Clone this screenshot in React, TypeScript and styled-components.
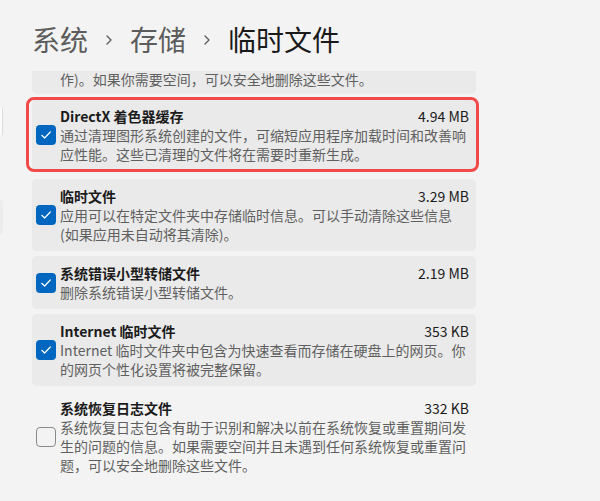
import styled, { createGlobalStyle } from 'styled-components';

const GlobalStyle = createGlobalStyle`
  html, body {
    margin: 0;
    padding: 0;
    background: #f3f3f3;
  }
  body {
    font-family: "Noto Sans CJK SC", "Noto Sans", sans-serif;
    color: #1b1b1b;
  }
`;

type Item = {
  title: string;
  size: string;
  lines: string[];
  checked: boolean;
  plain?: boolean;
  highlight?: boolean;
};

const items: Item[] = [
  {
    title: 'Windows 错误报告文件',
    size: '1.02 MB',
    lines: [
      '系统创建的 Windows 错误报告文件可用于诊断和解决问',
      '题(包括安装、升级或其他可能导致系统不稳定的操',
      '作)。如果你需要空间，可以安全地删除这些文件。',
    ],
    checked: true,
  },
  {
    title: 'DirectX 着色器缓存',
    size: '4.94 MB',
    lines: [
      '通过清理图形系统创建的文件，可缩短应用程序加载时间和改善响',
      '应性能。这些已清理的文件将在需要时重新生成。',
    ],
    checked: true,
    highlight: true,
  },
  {
    title: '临时文件',
    size: '3.29 MB',
    lines: ['应用可以在特定文件夹中存储临时信息。可以手动清除这些信息', '(如果应用未自动将其清除)。'],
    checked: true,
  },
  {
    title: '系统错误小型转储文件',
    size: '2.19 MB',
    lines: ['删除系统错误小型转储文件。'],
    checked: true,
  },
  {
    title: 'Internet 临时文件',
    size: '353 KB',
    lines: ['Internet 临时文件夹中包含为快速查看而存储在硬盘上的网页。你', '的网页个性化设置将被完整保留。'],
    checked: true,
  },
  {
    title: '系统恢复日志文件',
    size: '332 KB',
    lines: [
      '系统恢复日志包含有助于识别和解决以前在系统恢复或重置期间发',
      '生的问题的信息。如果需要空间并且未遇到任何系统恢复或重置问',
      '题，可以安全地删除这些文件。',
    ],
    checked: false,
    plain: true,
  },
];

const Chevron = () => (
  <ChevronIcon width="8" height="14" viewBox="0 0 8 14">
    <path d="M2 3 L6 7 L2 11" fill="none" stroke="#5c5c5c" strokeWidth="1.3" strokeLinecap="round" strokeLinejoin="round" />
  </ChevronIcon>
);

const Checkbox = ({ checked }: { checked: boolean }) => (
  <Box $checked={checked}>
    {checked && (
      <svg width="12" height="12" viewBox="0 0 12 12">
        <path d="M1.8 6.3 L4.6 9 L10.3 3" fill="none" stroke="#ffffff" strokeWidth="1.2" strokeLinecap="round" strokeLinejoin="round" />
      </svg>
    )}
  </Box>
);

const App = () => {
  return (
    <Page>
      <GlobalStyle />
      <EdgeRail>
        <EdgeItem $variant="outlined" />
        <EdgeItem $variant="filled" />
      </EdgeRail>
      <Main>
        <Header>
          <Crumb>系统</Crumb>
          <Chevron />
          <Crumb>存储</Crumb>
          <Chevron />
          <Crumb $current>临时文件</Crumb>
        </Header>
        <Viewport>
          <List>
            {items.map((item, i) => (
              <Card key={item.title} $plain={item.plain} $highlight={item.highlight} $clipped={i === 0}>
                <Checkbox checked={item.checked} />
                <Body>
                  <HeadRow>
                    <Title>{item.title}</Title>
                    <Size>{item.size}</Size>
                  </HeadRow>
                  {item.lines.map((line) => (
                    <Line key={line}>{line}</Line>
                  ))}
                </Body>
              </Card>
            ))}
          </List>
        </Viewport>
      </Main>
    </Page>
  );
};

const Page = styled.div`
  display: flex;
  height: 501px;
  overflow: hidden;
  background: #f3f3f3;
`;

const EdgeRail = styled.div`
  width: 3px;
  flex-shrink: 0;
  display: flex;
  flex-direction: column;
  gap: 64px;
  padding-top: 106px;
`;

const EdgeItem = styled.div<{ $variant: 'outlined' | 'filled' }>`
  height: ${(p) => (p.$variant === 'outlined' ? '30px' : '34px')};
  border-radius: 0 4px 4px 0;
  background: ${(p) => (p.$variant === 'outlined' ? '#fbfbfb' : '#ececec')};
  border-right: ${(p) => (p.$variant === 'outlined' ? '1px solid #dcdcdc' : 'none')};
`;

const Main = styled.div`
  flex: 1;
  display: flex;
  flex-direction: column;
  padding: 0 124px 0 29px;
  min-width: 0;
`;

const Header = styled.div`
  height: 44px;
  padding: 17px 0 10px;
  display: flex;
  align-items: center;
  flex-shrink: 0;
`;

const Crumb = styled.span<{ $current?: boolean }>`
  font-size: 28px;
  line-height: 44px;
  color: ${(p) => (p.$current ? '#1a1a1a' : '#5c5c5c')};
  white-space: nowrap;
`;

const ChevronIcon = styled.svg`
  margin: 2px 17px 0 17px;
  flex-shrink: 0;
`;

const Viewport = styled.div`
  flex: 1;
  overflow: hidden;
  position: relative;
  margin: 0 -8px;
  padding: 0 8px;
`;

/* scrolled list: the first card sits mostly above the viewport */
const List = styled.div`
  display: flex;
  flex-direction: column;
  gap: 5px;
  margin-top: -66px;
`;

const Card = styled.div<{ $plain?: boolean; $highlight?: boolean; $clipped?: boolean }>`
  position: relative;
  display: flex;
  align-items: center;
  gap: 4px;
  padding: 7px 7px ${(p) => (p.$clipped ? '5px' : '7px')} 4px;
  border-radius: 5px;
  background: ${(p) => (p.$plain ? 'transparent' : '#eaeaea')};

  ${(p) =>
    p.$highlight &&
    `
    margin-bottom: 3px;
    &::after {
      content: '';
      position: absolute;
      top: -2px;
      bottom: -1px;
      left: -6px;
      right: -3px;
      border: 3.5px solid #f24a4a;
      border-radius: 8px;
      pointer-events: none;
    }
  `}
`;

const Box = styled.div<{ $checked: boolean }>`
  width: 20px;
  height: 20px;
  flex-shrink: 0;
  box-sizing: border-box;
  border-radius: 4px;
  display: flex;
  align-items: center;
  justify-content: center;
  background: ${(p) => (p.$checked ? '#0067c0' : '#f3f3f3')};
  border: ${(p) => (p.$checked ? 'none' : '1px solid #8a8a8a')};
`;

const Body = styled.div`
  flex: 1;
  min-width: 0;
`;

const HeadRow = styled.div`
  display: flex;
  justify-content: space-between;
  align-items: center;
`;

const Title = styled.span`
  font-size: 14px;
  line-height: 20px;
  font-weight: 700;
  color: #1b1b1b;
`;

const Size = styled.span`
  font-size: 14px;
  line-height: 20px;
  color: #1b1b1b;
`;

const Line = styled.div`
  font-size: 14px;
  line-height: 19px;
  color: #5f5f5f;
  white-space: nowrap;
`;

export default App;
